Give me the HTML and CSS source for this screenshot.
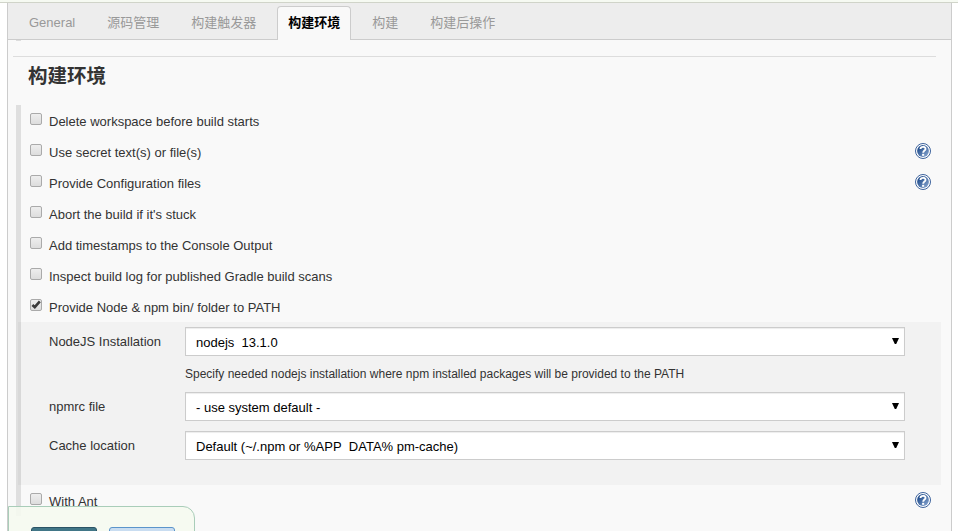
FILE: index.html
```html
<!DOCTYPE html>
<html lang="zh-CN">
<head>
<meta charset="utf-8">
<title>构建环境</title>
<link rel="stylesheet" href="styles.css">
</head>
<body>
<svg class="defs" aria-hidden="true">
  <defs>
    <linearGradient id="blue" x1="0" y1="0" x2="1" y2="1">
      <stop offset="0.2" stop-color="#24508f"/>
      <stop offset="1" stop-color="#8fabd3"/>
    </linearGradient>
    <symbol id="help" viewBox="0 0 16 16">
      <circle cx="8" cy="8" r="7.5" fill="#fff" stroke="#3c629c" stroke-width="1"/>
      <circle cx="8" cy="8" r="5.9" fill="url(#blue)"/>
      <path d="M5.5 6.1C5.5 3.1 10.5 3.1 10.5 5.9C10.5 7.6 8.2 7.6 8.2 9.8" fill="none" stroke="#fff" stroke-width="1.9"/>
      <rect x="7.1" y="10.8" width="2.1" height="2" fill="#fff"/>
    </symbol>
  </defs>
</svg>
<div class="topline"></div>
<main class="frame">
  <nav class="tabs">
    <a class="tab">General</a>
    <a class="tab">源码管理</a>
    <a class="tab">构建触发器</a>
    <a class="tab active">构建环境</a>
    <a class="tab">构建</a>
    <a class="tab">构建后操作</a>
  </nav>
  <div class="prev-group"></div>
  <h2 class="title">构建环境</h2>
  <section class="group">
    <label class="row"><span class="check"></span><span class="text">Delete workspace before build starts</span></label>
    <label class="row"><span class="check"></span><span class="text">Use secret text(s) or file(s)</span><svg class="help"><use href="#help"/></svg></label>
    <label class="row"><span class="check"></span><span class="text">Provide Configuration files</span><svg class="help"><use href="#help"/></svg></label>
    <label class="row"><span class="check"></span><span class="text">Abort the build if it's stuck</span></label>
    <label class="row"><span class="check"></span><span class="text">Add timestamps to the Console Output</span></label>
    <label class="row"><span class="check"></span><span class="text">Inspect build log for published Gradle build scans</span></label>
    <label class="row"><span class="check"><svg class="tick" viewBox="0 0 12 12"><path d="M2.4 6L4.8 8.2L9.8 2.4" fill="none" stroke="#3a3a3a" stroke-width="2.6"/></svg></span><span class="text">Provide Node &amp; npm bin/ folder to PATH</span></label>
    <div class="panel">
      <div class="field"><span class="name">NodeJS Installation</span><div class="select">nodejs&nbsp; 13.1.0<i class="arrow"></i></div></div>
      <p class="hint">Specify needed nodejs installation where npm installed packages will be provided to the PATH</p>
      <div class="field"><span class="name">npmrc file</span><div class="select">- use system default -<i class="arrow"></i></div></div>
      <div class="field"><span class="name">Cache location</span><div class="select">Default (~/.npm or %APP&nbsp; DATA% pm-cache)<i class="arrow"></i></div></div>
    </div>
    <label class="row"><span class="check"></span><span class="text">With Ant</span><svg class="help"><use href="#help"/></svg></label>
  </section>
</main>
<footer class="actions"><span class="button primary"></span><span class="button"></span></footer>
</body>
</html>
```

FILE: styles.css
```css
* { box-sizing: border-box; }
html, body { height: 100%; }
body {
  margin: 0;
  overflow: hidden;
  background: #fff;
  color: #333;
  font: 13px/16px "Liberation Sans", "Noto Sans CJK SC", sans-serif;
}
.defs { position: absolute; width: 0; height: 0; }
.topline { height: 3px; background: #f6faf2; border-bottom: 1px solid #d0d4c9; }
.frame {
  width: 945px;
  height: 528px;
  margin-left: 7px;
  background: #f9f9f9;
  border: solid #ccc;
  border-width: 0 1px;
}
.tabs {
  display: flex;
  gap: 10px;
  height: 37px;
  padding: 3px 0 0 10px;
  background: #ededed;
  border-bottom: 1px solid #ccc;
}
.tab {
  height: 34px;
  padding: 8px 10px 0;
  border: 1px solid transparent;
  border-bottom: 0;
  border-radius: 4px 4px 0 0;
  color: #999;
  line-height: 16px;
  white-space: nowrap;
}
.tab.active { background: #f9f9f9; border-color: #ccc; color: #000; font-weight: bold; }
.prev-group { width: 5px; height: 1px; margin-left: 8px; background: #ddd; }
.title {
  width: 923px;
  height: 49px;
  margin: 15px 0 0 5px;
  padding: 7px 0 0 15px;
  border-top: 1px solid #ddd;
  font-size: 19.5px;
  line-height: 24px;
}
.group {
  width: 925px;
  height: 411px;
  margin-left: 8px;
  border-left: 5px solid #dfdfdf;
}
.row { display: flex; height: 31px; padding-left: 9px; }
.check {
  width: 12px;
  height: 12px;
  margin-top: 8px;
  border: 1px solid #aaa;
  border-radius: 2px;
  background: linear-gradient(#eee, #ddd);
}
.tick { display: block; width: 12px; height: 12px; margin: -1px; }
.text { margin: 9px 0 0 7px; white-space: nowrap; }
.help { width: 16px; height: 16px; margin: 7px 10px 0 auto; }
.panel {
  height: 163px;
  margin-left: -3px;
  padding: 5px 0 0 31px;
  background: rgba(0, 0, 0, 0.026);
}
.field { display: flex; height: 29px; margin-bottom: 10px; }
.name { width: 136px; padding-top: 7px; }
.select {
  display: flex;
  width: 720px;
  height: 29px;
  padding: 7px 5px 0 10px;
  background: #fff;
  border: 1px solid #ccc;
  box-shadow: inset 0 1px 1px rgba(0, 0, 0, 0.075);
  color: #000;
}
.arrow {
  width: 7px;
  height: 6px;
  margin: 3px 0 0 auto;
  background: #000;
  clip-path: polygon(0 0, 100% 0, 60% 100%, 40% 100%);
}
.hint { height: 26px; margin: 0 0 0 136px; font-size: 12px; line-height: 16px; }
.actions {
  position: absolute;
  left: 8px;
  top: 506px;
  display: flex;
  gap: 12px;
  width: 187px;
  height: 40px;
  padding: 20px 0 0 22px;
  background: rgba(245, 249, 239, 0.9);
  border: 1px solid #a9cdb9;
  border-radius: 0 12px 0 0;
}
.button {
  width: 66px;
  height: 24px;
  border: 1px solid #5b94cb;
  border-radius: 3px;
  background: #c9ddf1;
}
.button.primary { background: #417687; border-color: #2b5365; }
```
